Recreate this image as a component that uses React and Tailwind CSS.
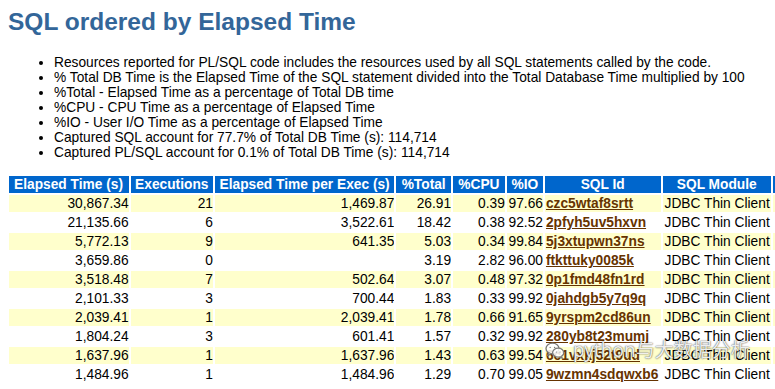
const notes = [
  'Resources reported for PL/SQL code includes the resources used by all SQL statements called by the code.',
  '% Total DB Time is the Elapsed Time of the SQL statement divided into the Total Database Time multiplied by 100',
  '%Total - Elapsed Time as a percentage of Total DB time',
  '%CPU - CPU Time as a percentage of Elapsed Time',
  '%IO - User I/O Time as a percentage of Elapsed Time',
  'Captured SQL account for 77.7% of Total DB Time (s): 114,714',
  'Captured PL/SQL account for 0.1% of Total DB Time (s): 114,714',
];

const headers = [
  'Elapsed Time (s)',
  'Executions',
  'Elapsed Time per Exec (s)',
  '%Total',
  '%CPU',
  '%IO',
  'SQL Id',
  'SQL Module',
  'SQL Text',
];

const rows = [
  ['30,867.34', '21', '1,469.87', '26.91', '0.39', '97.66', 'czc5wtaf8srtt', 'JDBC Thin Client', 'SELECT COUNT(*) FROM ORDERS'],
  ['21,135.66', '6', '3,522.61', '18.42', '0.38', '92.52', '2pfyh5uv5hxvn', 'JDBC Thin Client', 'SELECT T.ID, T.NAME FROM'],
  ['5,772.13', '9', '641.35', '5.03', '0.34', '99.84', '5j3xtupwn37ns', 'JDBC Thin Client', 'update ACCOUNT set'],
  ['3,659.86', '0', '', '3.19', '2.82', '96.00', 'ftkttuky0085k', 'JDBC Thin Client', 'call PKG_LOAD.RUN()'],
  ['3,518.48', '7', '502.64', '3.07', '0.48', '97.32', '0p1fmd48fn1rd', 'JDBC Thin Client', 'SELECT * FROM ITEMS'],
  ['2,101.33', '3', '700.44', '1.83', '0.33', '99.92', '0jahdgb5y7q9q', 'JDBC Thin Client', 'SELECT A.* FROM'],
  ['2,039.41', '1', '2,039.41', '1.78', '0.66', '91.65', '9yrspm2cd86un', 'JDBC Thin Client', 'update STOCK set'],
  ['1,804.24', '3', '601.41', '1.57', '0.32', '99.92', '280yb8t23mumj', 'JDBC Thin Client', 'SELECT B.* FROM'],
  ['1,637.96', '1', '1,637.96', '1.43', '0.63', '99.54', '6c1vxkj52t9ud', 'JDBC Thin Client', 'update USERS set'],
  ['1,484.96', '1', '1,484.96', '1.29', '0.70', '99.05', '9wzmn4sdqwxb6', 'JDBC Thin Client', 'update LOGS set'],
];

function WeChatIcon() {
  return (
    <svg width="20" height="17" viewBox="0 0 20 17" fill="none" stroke="#7a7a7a" strokeWidth="1.3">
      <ellipse cx="7.5" cy="6.5" rx="6.5" ry="5.3" fill="rgba(255,255,255,0.85)" />
      <path d="M3.5 10.8 L2.8 13.2 L5.6 11.8" fill="rgba(255,255,255,0.85)" />
      <ellipse cx="13.2" cy="10.6" rx="5.6" ry="4.5" fill="rgba(255,255,255,0.85)" />
      <path d="M16.4 14.2 L17.2 16.2 L14.8 15" fill="rgba(255,255,255,0.85)" />
      <circle cx="5.2" cy="5.4" r="0.7" fill="#7a7a7a" stroke="none" />
      <circle cx="9.6" cy="5.4" r="0.7" fill="#7a7a7a" stroke="none" />
      <circle cx="11.4" cy="10" r="0.6" fill="#7a7a7a" stroke="none" />
      <circle cx="15" cy="10" r="0.6" fill="#7a7a7a" stroke="none" />
    </svg>
  );
}

export default function App() {
  return (
    <div className="relative w-[775px] h-[389px] overflow-hidden bg-white font-['Liberation_Sans',Arial,sans-serif] text-black">
      <h3 className="ml-[8px] pt-[8px] text-[24.5px] leading-[28px] font-bold text-[#336699]">
        SQL ordered by Elapsed Time
      </h3>

      <ul className="mt-[18.5px] pl-[54px] list-disc text-[13.75px] leading-[15px]">
        {notes.map((n, i) => (
          <li key={i} className="whitespace-nowrap">{n}</li>
        ))}
      </ul>

      <table className="mt-[14.5px] ml-[6.5px] w-[1070px] table-fixed border-separate border-spacing-x-[2.5px] border-spacing-y-[2px] text-[13.75px]">
        <colgroup>
          <col className="w-[119.5px]" />
          <col className="w-[82px]" />
          <col className="w-[178.5px]" />
          <col className="w-[54.5px]" />
          <col className="w-[51.5px]" />
          <col className="w-[36px]" />
          <col className="w-[115px]" />
          <col className="w-[108px]" />
          <col className="w-[300px]" />
        </colgroup>
        <thead>
          <tr>
            {headers.map((h) => (
              <th
                key={h}
                className="h-[17px] p-0 bg-[#0066CC] text-white font-bold text-center leading-[16px] whitespace-nowrap overflow-hidden"
              >
                {h}
              </th>
            ))}
          </tr>
        </thead>
        <tbody>
          {rows.map((r, i) => {
            const bg = i % 2 === 0 ? 'bg-[#FFFFCC]' : 'bg-white';
            return (
              <tr key={i}>
                {r.map((c, j) => {
                  if (j === 6) {
                    return (
                      <td key={j} className={`${bg} h-[17px] p-0 pl-[1px] leading-[17px] text-left whitespace-nowrap overflow-hidden`}>
                        <span className="font-bold text-[#663300] underline">{c}</span>
                      </td>
                    );
                  }
                  const left = j >= 7;
                  return (
                    <td
                      key={j}
                      className={`${bg} h-[17px] p-0 leading-[17px] whitespace-nowrap overflow-hidden ${left ? 'text-left pl-[2px]' : 'text-right'}`}
                    >
                      {c}
                    </td>
                  );
                })}
              </tr>
            );
          })}
        </tbody>
      </table>

      <div className="absolute left-[545px] top-[339px] flex items-center gap-[8px] pointer-events-none">
        <WeChatIcon />
        <span className="font-['Noto_Sans','Noto_Sans_CJK_SC',sans-serif] text-[19px] leading-[22px] text-white/90 [text-shadow:0_0_1px_rgba(0,0,0,0.6),0_0_2px_rgba(0,0,0,0.45)]">
          python与大数据分析
        </span>
      </div>
    </div>
  );
}
